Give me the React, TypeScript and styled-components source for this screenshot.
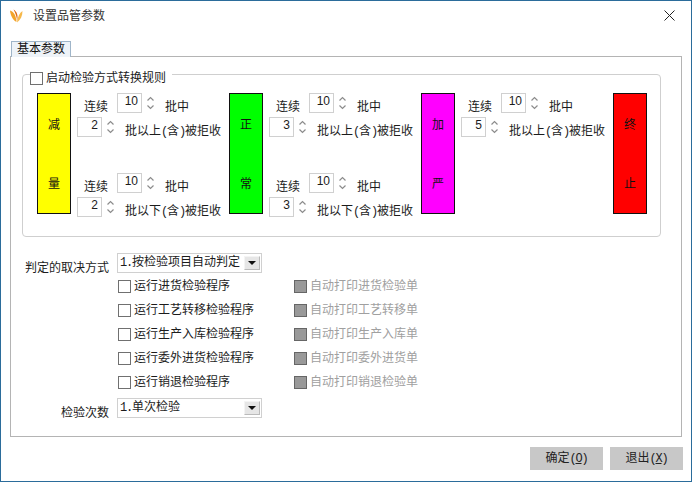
import React from 'react';
import styled, { createGlobalStyle } from 'styled-components';

const Global = createGlobalStyle`
  html, body { margin: 0; padding: 0; background: #fff; }
  * { box-sizing: border-box; }
`;

const Window = styled.div`
  width: 692px;
  height: 482px;
  border: 1px solid #2b6c9b;
  background: #fff;
  color: #1c1c1c;
  font: 12px/14px "Liberation Sans", "Noto Sans CJK SC", sans-serif;
  overflow: hidden;
`;

const TitleBar = styled.div`
  height: 30px;
  display: flex;
  align-items: center;
  padding: 0 16px 1px 9px;
`;

const Title = styled.div`
  margin-left: 10px;
  flex: 1;
  color: #333;
`;

const Content = styled.div`
  padding: 10px 9px 0;
`;

const Tab = styled.div`
  width: 60px;
  height: 16px;
  margin-left: 1px;
  margin-bottom: -1px;
  position: relative;
  z-index: 1;
  background: #eef3f8;
  border: 1px solid #9fb5c9;
  border-bottom: none;
  text-align: center;
  line-height: 14px;
  color: #111;
`;

const Panel = styled.div`
  width: 672px;
  height: 381px;
  border: 1px solid #b4b4b4;
  padding: 17px 0 0 11px;
`;

const Group = styled.div`
  position: relative;
  width: 639px;
  height: 163px;
  border: 1px solid #cfcfcf;
  border-radius: 4px;
  padding: 18px 0 0 14px;
  display: flex;
  align-items: flex-start;
`;

const Legend = styled.label`
  position: absolute;
  left: 7px;
  top: -4px;
  background: #fff;
  padding-right: 6px;
  display: flex;
  align-items: center;
  gap: 3px;
  height: 14px;
`;

const Box = styled.span`
  width: 13px;
  height: 13px;
  flex: none;
  border: 1px solid ${p => (p.$off ? '#666' : '#707070')};
  background: ${p => (p.$off ? '#999' : '#fff')};
`;

const Stage = styled.div`
  width: 192px;
  flex: none;
  display: flex;
  align-items: flex-start;
`;

const Bar = styled.div`
  width: 34px;
  height: 121px;
  flex: none;
  border: 1px solid #111;
  background: ${p => p.$color};
  display: flex;
  flex-direction: column;
  justify-content: space-around;
  align-items: center;
  padding-top: 2px;
  color: #111;
`;

const Rules = styled.div`
  display: flex;
  flex-direction: column;
  gap: 36px;
  padding-left: 6px;
`;

const Rule = styled.div`
  display: flex;
  flex-direction: column;
  gap: 4px;
`;

const RuleLine = styled.div`
  display: flex;
  align-items: flex-start;
  height: 20px;
  padding-left: ${p => (p.$lead ? '7px' : '0')};
`;

const RuleText = styled.span`
  margin-top: 7px;
  margin-left: ${p => p.$gap}px;
  white-space: nowrap;
`;

const Spin = styled.div`
  width: 25px;
  height: 20px;
  flex: none;
  border: 1px solid #d0d0d0;
  background: #fff;
  text-align: right;
  padding: 0 3px 0 0;
  margin-left: ${p => p.$gap || 0}px;
`;

const Arrows = styled.svg`
  width: 7px;
  height: 14px;
  flex: none;
  margin: 3px 0 0 5px;
`;

const Form = styled.div`
  margin: 16px 0 0;
  display: flex;
  flex-direction: column;
`;

const FieldRow = styled.div`
  display: flex;
  align-items: flex-start;
  height: 20px;
  margin-top: ${p => p.$mt || 0}px;
`;

const FieldLabel = styled.div`
  width: 87px;
  padding-top: 8px;
  text-align: right;
  margin-right: 8px;
`;

const Select = styled.div`
  width: 145px;
  height: 20px;
  border: 1px solid #d0d0d0;
  display: flex;
  align-items: center;
  padding: 0 1px 1px 2px;
`;

const SelectText = styled.span`
  flex: 1;
  white-space: nowrap;
`;

const SelectButton = styled.span`
  width: 16px;
  height: 14px;
  background: #e6e6e6;
  border: 1px solid #f4f4f4;
  border-right-color: #bbb;
  border-bottom-color: #bbb;
  display: flex;
  align-items: center;
  justify-content: center;
  margin-top: 1px;
`;

const Triangle = styled.span`
  width: 0;
  height: 0;
  border-left: 4px solid transparent;
  border-right: 4px solid transparent;
  border-top: 4px solid #111;
`;

const Options = styled.div`
  margin: 1px 0 0 96px;
  display: grid;
  grid-template-columns: 176px auto;
  grid-auto-rows: 24px;
`;

const Option = styled.div`
  display: flex;
  align-items: center;
  gap: 3px;
  color: ${p => (p.$off ? '#a0a0a0' : 'inherit')};
  white-space: nowrap;
`;

const Footer = styled.div`
  display: flex;
  justify-content: flex-end;
  gap: 7px;
  margin: 10px -1px 0 0;
`;

const Button = styled.button`
  width: 73px;
  height: 23px;
  border: none;
  padding: 0;
  background: #c8c8c8;
  color: #222;
  font: inherit;
`;

const Latin = styled.span`
  font-family: "Liberation Mono", monospace;
  letter-spacing: -1.2px;
  text-decoration: ${p => (p.$key ? 'underline' : 'none')};
`;

const Mixed = ({ text }: { text: string }) => (
  <>
    {text.split(/([\x21-\x7e]+)/).map((part, i) =>
      i % 2 ? <Latin key={i}>{part}</Latin> : part
    )}
  </>
);

const Logo = () => (
  <svg width="13" height="14" viewBox="0 0 13 14" style={{ flex: 'none' }}>
    <path d="M0 1.5C3.5 2.5 6 6 6.5 13C3 11 0.5 7 0 1.5Z" fill="#f2a32a" />
    <path d="M3.5 0.5C7 2.5 8.5 6.5 7 12.5C7 8 5.5 4 3.5 0.5Z" fill="#e06a14" />
    <path d="M12.5 2C12.5 7 10.5 11 7 13.5C7.5 8 9.5 4 12.5 2Z" fill="#f6b84a" />
  </svg>
);

const CloseIcon = () => (
  <svg width="11" height="11" viewBox="0 0 11 11">
    <path d="M0.5 0.5L10.5 10.5M10.5 0.5L0.5 10.5" stroke="#222" strokeWidth="1" fill="none" />
  </svg>
);

const SpinArrows = () => (
  <Arrows viewBox="0 0 7 14">
    <path d="M0.5 4.5L3.5 1.5L6.5 4.5M0.5 9.5L3.5 12.5L6.5 9.5" stroke="#8c8c8c" strokeWidth="1.2" fill="none" />
  </Arrows>
);

const RuleBlock = ({ count, limit, text }: { count: number; limit: number; text: string }) => (
  <Rule>
    <RuleLine $lead>
      <RuleText $gap={0}>连续</RuleText>
      <Spin $gap={9}>{count}</Spin>
      <SpinArrows />
      <RuleText $gap={11}>批中</RuleText>
    </RuleLine>
    <RuleLine>
      <Spin>{limit}</Spin>
      <SpinArrows />
      <RuleText $gap={11}><Mixed text={text} /></RuleText>
    </RuleLine>
  </Rule>
);

const UP = '批以上(含)被拒收';
const DOWN = '批以下(含)被拒收';

const stages = [
  { a: '减', b: '量', color: '#ffff00', rules: [[10, 2, UP], [10, 2, DOWN]] },
  { a: '正', b: '常', color: '#00ff00', rules: [[10, 3, UP], [10, 3, DOWN]] },
  { a: '加', b: '严', color: '#ff00ff', rules: [[10, 5, UP]] },
  { a: '终', b: '止', color: '#ff0000', rules: [] },
] as { a: string; b: string; color: string; rules: [number, number, string][] }[];

const options = [
  ['运行进货检验程序', '自动打印进货检验单'],
  ['运行工艺转移检验程序', '自动打印工艺转移单'],
  ['运行生产入库检验程序', '自动打印生产入库单'],
  ['运行委外进货检验程序', '自动打印委外进货单'],
  ['运行销退检验程序', '自动打印销退检验单'],
];

export default function App() {
  return (
    <>
      <Global />
      <Window>
        <TitleBar>
          <Logo />
          <Title>设置品管参数</Title>
          <CloseIcon />
        </TitleBar>
        <Content>
          <Tab>基本参数</Tab>
          <Panel>
            <Group>
              <Legend>
                <Box />
                启动检验方式转换规则
              </Legend>
              {stages.map(s => (
                <Stage key={s.a}>
                  <Bar $color={s.color}>
                    <span>{s.a}</span>
                    <span>{s.b}</span>
                  </Bar>
                  <Rules>
                    {s.rules.map(r => (
                      <RuleBlock key={r[2]} count={r[0]} limit={r[1]} text={r[2]} />
                    ))}
                  </Rules>
                </Stage>
              ))}
            </Group>
            <Form>
              <FieldRow>
                <FieldLabel>判定的取决方式</FieldLabel>
                <Select>
                  <SelectText><Mixed text="1." />按检验项目自动判定</SelectText>
                  <SelectButton><Triangle /></SelectButton>
                </Select>
              </FieldRow>
              <Options>
                {options.map(([run, print]) => (
                  <React.Fragment key={run}>
                    <Option><Box />{run}</Option>
                    <Option $off><Box $off />{print}</Option>
                  </React.Fragment>
                ))}
              </Options>
              <FieldRow $mt={4}>
                <FieldLabel>检验次数</FieldLabel>
                <Select>
                  <SelectText><Mixed text="1." />单次检验</SelectText>
                  <SelectButton><Triangle /></SelectButton>
                </Select>
              </FieldRow>
            </Form>
          </Panel>
          <Footer>
            <Button>确定<Latin>(</Latin><Latin $key>O</Latin><Latin>)</Latin></Button>
            <Button>退出<Latin>(</Latin><Latin $key>X</Latin><Latin>)</Latin></Button>
          </Footer>
        </Content>
      </Window>
    </>
  );
}
